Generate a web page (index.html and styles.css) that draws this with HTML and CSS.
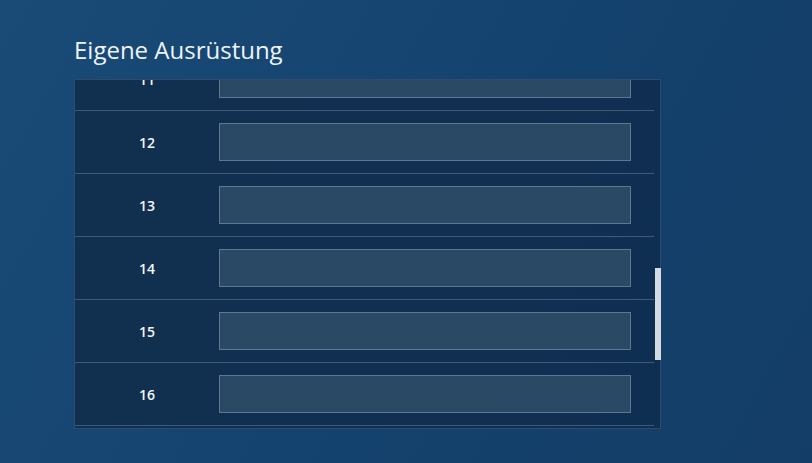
FILE: index.html
```html
<!DOCTYPE html>
<html lang="de">
<head>
<meta charset="utf-8">
<title>Eigene Ausrüstung</title>
<link rel="stylesheet" href="styles.css">
</head>
<body>
<main class="page">
  <h1 class="title">Eigene Ausrüstung</h1>
  <div class="list-wrap">
    <div class="list" id="list">
      <div class="list-inner">
        <div class="row"><span class="num">1</span><input class="field" type="text"></div>
        <div class="row"><span class="num">2</span><input class="field" type="text"></div>
        <div class="row"><span class="num">3</span><input class="field" type="text"></div>
        <div class="row"><span class="num">4</span><input class="field" type="text"></div>
        <div class="row"><span class="num">5</span><input class="field" type="text"></div>
        <div class="row"><span class="num">6</span><input class="field" type="text"></div>
        <div class="row"><span class="num">7</span><input class="field" type="text"></div>
        <div class="row"><span class="num">8</span><input class="field" type="text"></div>
        <div class="row"><span class="num">9</span><input class="field" type="text"></div>
        <div class="row"><span class="num">10</span><input class="field" type="text"></div>
        <div class="row"><span class="num">11</span><input class="field" type="text"></div>
        <div class="row"><span class="num">12</span><input class="field" type="text"></div>
        <div class="row"><span class="num">13</span><input class="field" type="text"></div>
        <div class="row"><span class="num">14</span><input class="field" type="text"></div>
        <div class="row"><span class="num">15</span><input class="field" type="text"></div>
        <div class="row"><span class="num">16</span><input class="field" type="text"></div>
        <div class="row"><span class="num">17</span><input class="field" type="text"></div>
        <div class="row"><span class="num">18</span><input class="field" type="text"></div>
        <div class="row"><span class="num">19</span><input class="field" type="text"></div>
        <div class="row"><span class="num">20</span><input class="field" type="text"></div>
      </div>
    </div>
    <div class="thumb"></div>
  </div>
</main>
<script src="script.js"></script>
</body>
</html>
```
FILE: styles.css
```css
html, body {
  margin: 0;
  height: 100%;
}
body {
  background: linear-gradient(120deg, #1a4a76 0%, #14436f 50%, #133d66 100%);
  font-family: "Open Sans", "Liberation Sans", sans-serif;
  color: #eef3f8;
  overflow: hidden;
}
.page {
  padding: 34px 0 0 74px;
}
.title {
  margin: 0 0 13px;
  font-size: 24px;
  line-height: 32px;
  font-weight: 400;
  color: #eef3f8;
}
.list-wrap {
  position: relative;
  width: 587px;
  height: 350px;
}
.list {
  box-sizing: border-box;
  width: 587px;
  height: 350px;
  border: 1px solid rgba(70, 100, 135, 0.55);
  background: linear-gradient(100deg, #11304f 0%, #112f51 60%, #0f2f52 100%);
  overflow-y: scroll;
  scrollbar-width: none;
}
.list::-webkit-scrollbar {
  display: none;
}
.list-inner {
  padding: 49px 6px 7px 0;
}
.row {
  display: grid;
  grid-template-columns: 144px 412px;
  align-items: center;
  height: 62px;
  border-bottom: 1px solid #3d5a78;
}
.num {
  text-align: center;
  font-size: 14px;
  font-weight: 600;
  color: #f2f6fa;
}
.field {
  box-sizing: border-box;
  width: 412px;
  height: 38px;
  margin: 0;
  border: 1px solid #5a7793;
  border-radius: 0;
  background: #2a4964;
  outline: none;
}
.thumb {
  position: absolute;
  right: 0;
  top: 189px;
  width: 6px;
  height: 92px;
  background: #d4dae1;
}
```
FILE: script.js
```js
document.getElementById('list').scrollTop = 711;
```
